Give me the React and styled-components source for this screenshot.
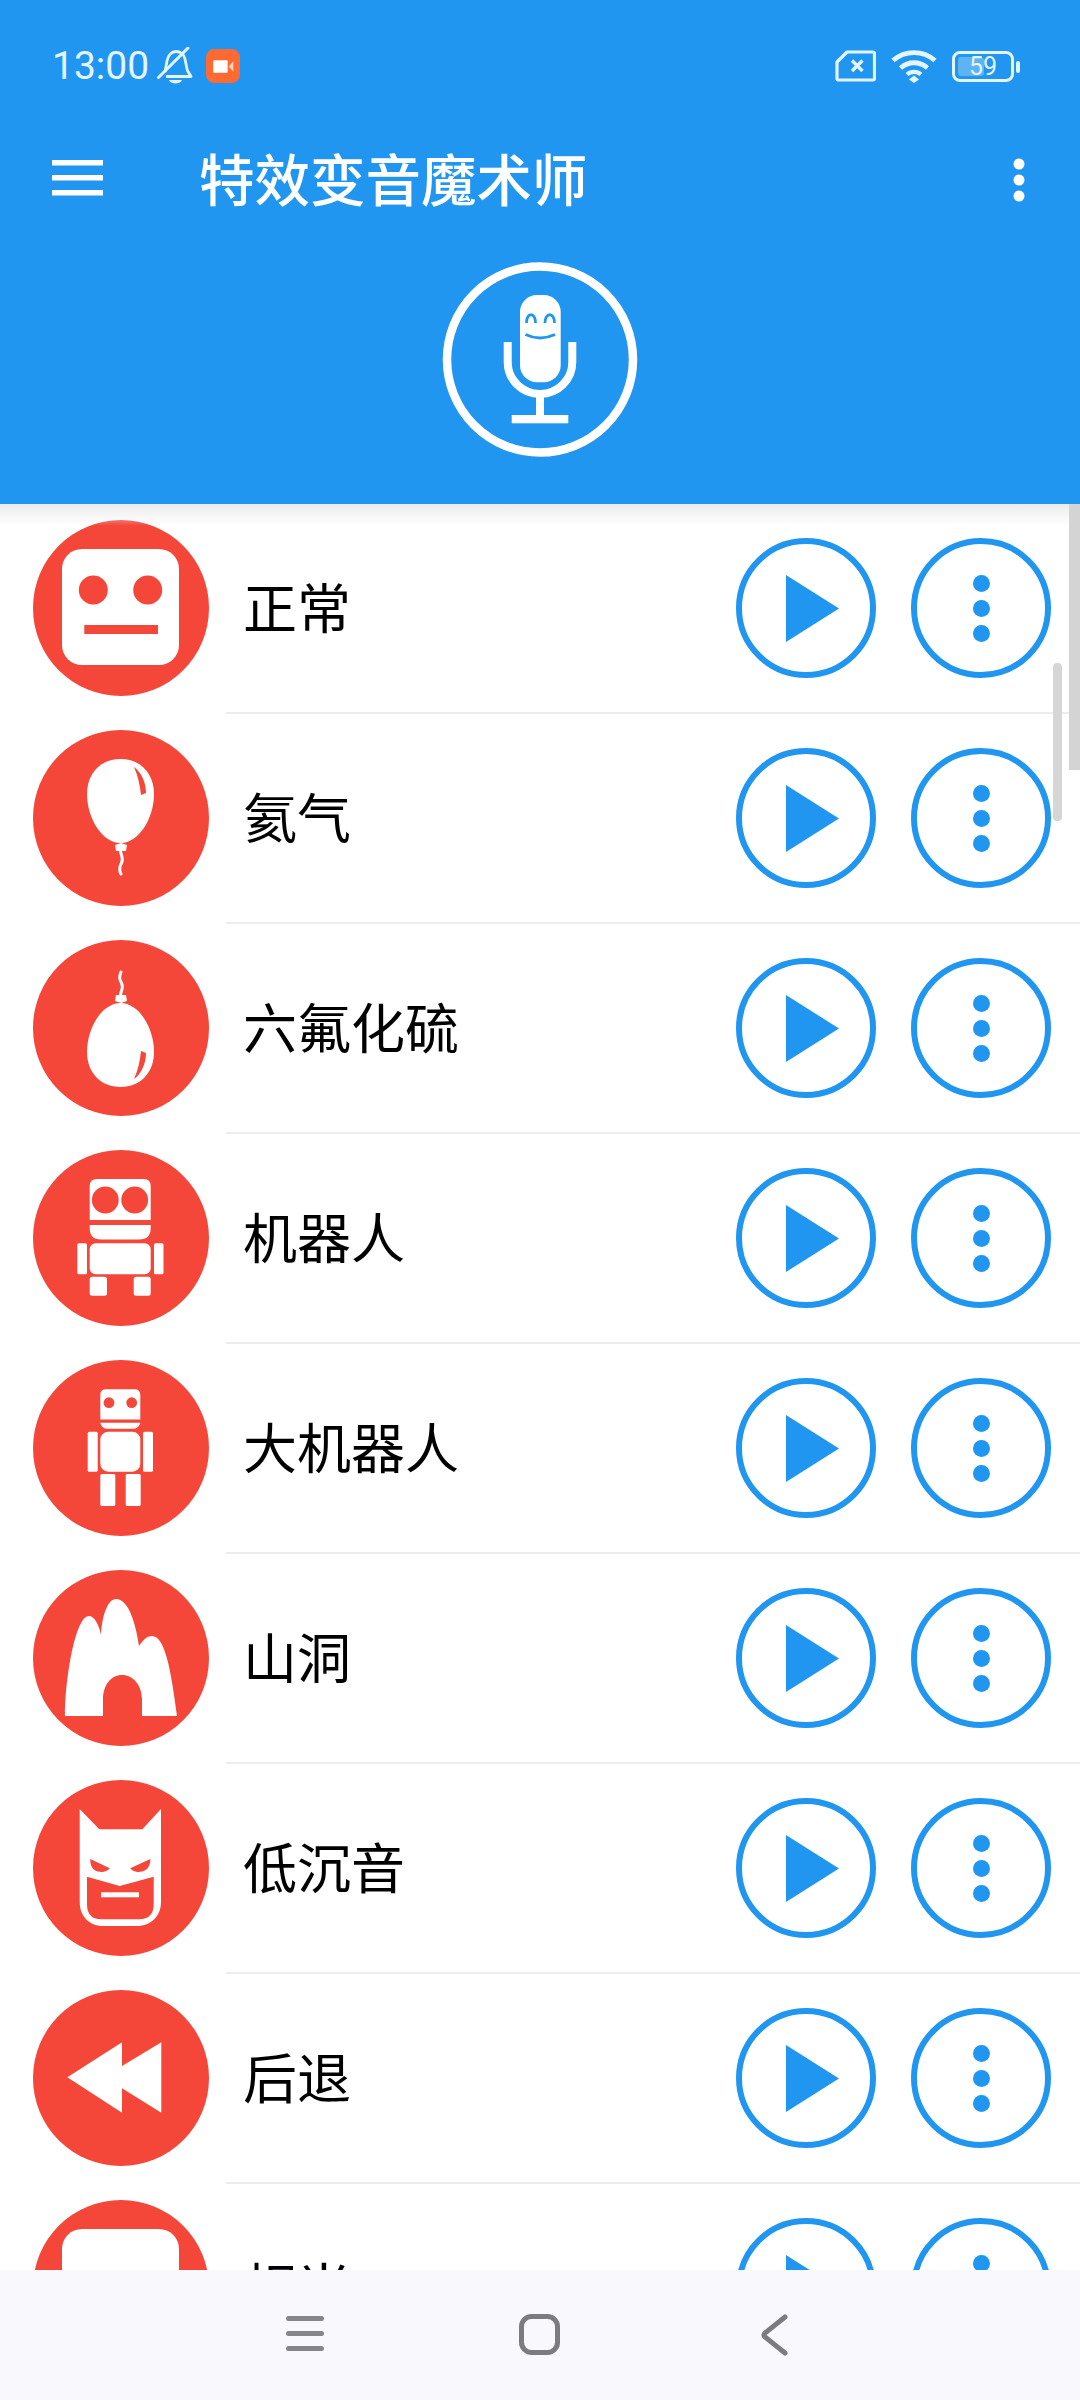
import React from 'react';
import styled, { createGlobalStyle } from 'styled-components';

const Global = createGlobalStyle`
  html, body { margin: 0; padding: 0; background: #fff; }
  * { box-sizing: border-box; }
`;
const BLUE = '#2196f0';
const RED = '#f44639';
const CJK = '"Noto Sans CJK SC", "Noto Sans", sans-serif';

const Page = styled.div`
  width: 1080px; height: 2400px; display: flex; flex-direction: column; overflow: hidden; background: #fff;
`;
const Header = styled.header`
  background: ${BLUE}; height: 504px; flex: none; display: flex; flex-direction: column;
`;
const StatusBar = styled.div`
  height: 132px; display: flex; align-items: center; justify-content: space-between; padding: 0 62px 0 52px;
`;
const StatusGroup = styled.div`
  display: flex; align-items: center; gap: ${p => p.$gap}px;
`;
const Clock = styled.span`
  font: 400 39px/1 Roboto, sans-serif; color: #e3f5ff;
`;
const Toolbar = styled.div`
  height: 96px; display: flex; align-items: center; padding: 0 55px 4px 52px;
`;
const Title = styled.h1`
  flex: 1; margin: 0 0 0 96px; font: 500 55.500px/1 ${CJK}; color: #fff;
`;
const LogoWrap = styled.div`
  display: flex; justify-content: center; margin-top: 33px;
`;
const List = styled.main`
  flex: 1; min-height: 0; overflow: hidden; position: relative;
`;
const TopShadow = styled.div`
  position: absolute; top: 0; left: 0; right: 0; height: 22px;
  background: linear-gradient(#ececee, rgba(255,255,255,0));
`;
const Track = styled.div`
  position: absolute; top: 0; right: 0; width: 11px; height: 266px; background: #d4d4d4;
`;
const Thumb = styled.div`
  position: absolute; top: 159px; right: 18px; width: 9px; height: 158px; border-radius: 4px; background: #d6d6d6;
`;
const Row = styled.div`
  height: 210px; display: flex; align-items: flex-start;
`;
const Avatar = styled.svg`
  width: 176px; height: 176px; flex: none; margin: 16px 17px 0 33px; display: block;
`;
const RowBody = styled.div`
  flex: 1; height: 210px; display: flex; align-items: center; padding: 0 29px 0 17px; gap: 35px;
  border-bottom: 2px solid #ececec;
`;
const Label = styled.span`
  flex: 1; font: 400 54px/1 ${CJK}; color: #000; padding-bottom: 4px;
`;
const RoundButton = styled.button`
  width: 140px; height: 140px; flex: none; border: 6.500px solid ${BLUE}; border-radius: 50%; background: #fff;
  padding: 0; display: flex; align-items: center; justify-content: center;
`;
const PlayGlyph = styled.svg`
  width: 53px; height: 67px; margin-left: 12px; display: block;
`;
const Dots = styled.span`
  display: flex; flex-direction: column; gap: 8px;
`;
const Dot = styled.i`
  width: 17px; height: 17px; border-radius: 50%; background: ${BLUE}; display: block;
`;
const NavBar = styled.nav`
  height: 130px; flex: none; background: #f9f8fd; position: relative; z-index: 1;
  display: flex; align-items: flex-start;
`;
const NavSlot = styled.div`
  position: absolute; top: 44px; left: ${p => p.$left}px; display: flex;
`;
const RecGlyph = styled.svg`
  width: 34px; height: 34px; margin-left: 5px; display: block;
`;
const MoreGlyph = styled.svg`
  width: 12px; height: 44px; margin-top: 3px; display: block;
`;

const Face = () => (
  <>
    <rect x="29" y="29" width="117" height="116" rx="20" fill="#fff" />
    <circle cx="60.3" cy="70" r="14.5" fill={RED} />
    <circle cx="114.7" cy="70" r="14.5" fill={RED} />
    <rect x="51.3" y="105" width="73.7" height="9" fill={RED} />
  </>
);
const Screen = () => (
  <rect x="29" y="29" width="117" height="116" rx="20" fill="#fff" />
);
const Balloon = () => (
  <>
    <path d="M87.5 29C108 29 121 44 121 64C121 88 106 113 87.5 113C69 113 54 88 54 64C54 44 67 29 87.500 29Z" fill="#fff" />
    <path d="M101 37C108 42 113 52 113 63L108 65C107 55 105 46 101 37Z" fill={RED} />
    <path d="M82 115L88 113L94 115L93 121H83Z" fill="#fff" />
    <path d="M87.5 121C88 126 91 128 88.5 133C86 137 86 140 88 144" fill="none" stroke="#fff" strokeWidth="3" strokeLinecap="round" />
  </>
);
const Robot = () => (
  <g fill="#fff">
    <path d="M64 29H110.7Q117.7 29 117.7 36V70H56.7V36Q56.7 29 64 29Z" />
    <circle cx="72.3" cy="50" r="13.4" fill={RED} />
    <circle cx="101.7" cy="50" r="13.4" fill={RED} />
    <path d="M56.7 75H117.7V78Q117.7 89.5 106 89.5H68Q56.7 89.5 56.7 78Z" />
    <rect x="56.7" y="93.3" width="61" height="31" rx="6" />
    <rect x="44.3" y="93.3" width="9.7" height="31" rx="1.5" />
    <rect x="121" y="93.3" width="9.5" height="31" rx="1.5" />
    <rect x="56.7" y="126.7" width="17.3" height="19" rx="2.5" />
    <rect x="100.7" y="126.7" width="17" height="19" rx="2.5" />
  </g>
);
const BigRobot = () => (
  <g fill="#fff">
    <path d="M73 29.3H101.5Q107.3 29.3 107.3 35V59.5H67.3V35Q67.3 29.3 73 29.3Z" />
    <circle cx="76" cy="42.7" r="5.4" fill={RED} />
    <circle cx="98.7" cy="42.7" r="5.4" fill={RED} />
    <path d="M67.3 62.7H107.3V63Q105.5 68.8 100 68.8H74Q69 68.8 67.3 63Z" />
    <rect x="67.3" y="71.7" width="40" height="40" rx="8" />
    <rect x="54.7" y="71.7" width="10" height="40" rx="1.5" />
    <rect x="110" y="71.7" width="10" height="40" rx="1.5" />
    <rect x="67.3" y="114" width="15" height="32" rx="1.5" />
    <rect x="92.7" y="114" width="15" height="32" rx="1.5" />
  </g>
);
const Cave = () => (
  <path fill="#fff" d="M32 146C32 110 42 46 56 46C61 46 66 54 68 65C69 45 75 29 83 29C96 29 103 55 106 76C110 70 114 66 119 66C132 66 138 100 144 146H109V130C109 115 100 105 89 105C78 105 70 115 70 130V146Z" />
);
const Bat = () => (
  <>
    <path fill="#fff" d="M46.7 29L66.3 49.3H109.3L128 29V122C128 136 118 146 104 146H70C56 146 46.7 136 46.7 122Z" />
    <path fill={RED} d="M57.3 79L76.7 88.3C74 92 69 92.5 65 91.5C60 90.5 57 86 57.3 79Z" />
    <path fill={RED} d="M117.3 79L97.3 88.3C100 92 105 92.5 109 91.5C114 90.5 117.5 86 117.3 79Z" />
    <path fill={RED} d="M54 96.7L86.7 106L120.7 96.7V124Q120.7 139.3 106 139.3H68Q54 139.3 54 124Z" />
    <rect x="68" y="112.3" width="38" height="5" fill="#fff" />
  </>
);
const Rewind = () => (
  <path fill="#fff" d="M34.3 87.3L89 52.3V76L128.3 52.3V122.7L89 98.3V122.7Z" />
);

const rows = [
  ['正常', <Face />],
  ['氦气', <Balloon />],
  ['六氟化硫', <g transform="translate(0 176) scale(1 -1)"><Balloon /></g>],
  ['机器人', <Robot />],
  ['大机器人', <BigRobot />],
  ['山洞', <Cave />],
  ['低沉音', <Bat />],
  ['后退', <Rewind />],
  ['相当', <Screen />],
];

const PlayIcon = () => (
  <PlayGlyph viewBox="0 0 53 67"><path d="M0 0L53 33.500L0 67Z" fill={BLUE} /></PlayGlyph>
);

const Logo = () => (
  <svg width="196" height="197" viewBox="-1 -1 196 197">
    <circle cx="97" cy="97.5" r="93" fill="none" stroke="#fff" strokeWidth="8.500" />
    <rect x="77" y="33" width="40.7" height="87.3" rx="17" fill="#fff" />
    <path d="M83.5 61C83.5 50 92.5 50 92.5 61M102 61C102 50 111.5 50 111.5 61" fill="none" stroke={BLUE} strokeWidth="2.800" />
    <path d="M82.5 72.5Q97 79.5 112 72.5" fill="none" stroke={BLUE} strokeWidth="3" />
    <path d="M64.7 80V100A32.3 32 0 0 0 129.3 100V80" fill="none" stroke="#fff" strokeWidth="8" />
    <rect x="93" y="132" width="8" height="22" fill="#fff" />
    <rect x="68.7" y="153" width="56.6" height="8.3" fill="#fff" />
  </svg>
);

const C = '#e3f5ff';
const BellOff = () => (
  <svg width="36" height="38" viewBox="0 0 36 38">
    <path d="M8 25L10 14C11 8 15 4.5 19 4.5C23 4.5 27 7 28 12L30 22C30.5 25 33 27 34 29.5H9" fill="none" stroke={C} strokeWidth="2.800" strokeLinejoin="round" />
    <path d="M1.500 30.500L31 1" stroke={C} strokeWidth="3" strokeLinecap="round" />
    <path d="M12 33H25C24 37.500 13 37.500 12 33Z" fill={C} />
  </svg>
);
const RecIcon = () => (
  <RecGlyph viewBox="0 0 33 33">
    <rect width="33" height="33" rx="8" fill="#ff6a33" />
    <rect x="7" y="11" width="14" height="12" rx="1" fill="#fff" />
    <path d="M22 17L26.500 12V22Z" fill="#ffd2bd" />
  </RecGlyph>
);
const Sim = () => (
  <svg width="41" height="32" viewBox="0 0 41 32">
    <path d="M12 2H38A1.500 1.500 0 0 1 39.500 3.500V28.500A1.500 1.500 0 0 1 38 30H3.500A1.500 1.500 0 0 1 2 28.500V12Z" fill="none" stroke={C} strokeWidth="3.200" strokeLinejoin="round" />
    <path d="M17 10.500L27.500 21M27.500 10.500L17 21" stroke={C} strokeWidth="3.400" />
  </svg>
);
const Wifi = () => (
  <svg width="46" height="34" viewBox="0 0 46 34">
    <path d="M2 11.500C14 1 32 1 44 11.500" fill="none" stroke={C} strokeWidth="4.800" />
    <path d="M9.500 19C17.500 12 28.500 12 36.500 19" fill="none" stroke={C} strokeWidth="4.800" />
    <path d="M16 25.500C20 22 26 22 30 25.500" fill="none" stroke={C} strokeWidth="4.200" />
    <path d="M23 26.500L28 30.500L23 34L18 30.500Z" fill={C} />
  </svg>
);
const Battery = styled.div`
  width: 62px; height: 31px; border: 3px solid ${C}; border-radius: 8px; position: relative;
  display: flex; align-items: center; justify-content: center;
  font: 400 25px/1 Roboto, sans-serif; color: ${C}; margin-right: 4px;
`;
const BatteryFill = styled.i`
  position: absolute; left: 3px; top: 3px; bottom: 3px; width: 26px; border-radius: 3px; background: rgba(255,255,255,.28);
`;
const BatteryNub = styled.i`
  position: absolute; right: -9px; top: 7px; width: 4px; height: 12px; border-radius: 2px; background: ${C};
`;
const BatteryText = styled.span`
  position: relative;
`;

const Menu = () => (
  <svg width="51" height="36" viewBox="0 0 51 36">
    <rect y="0" width="51" height="5.500" fill="#fff" />
    <rect y="15" width="51" height="5.500" fill="#fff" />
    <rect y="30" width="51" height="5.500" fill="#fff" />
  </svg>
);
const More = () => (
  <MoreGlyph viewBox="0 0 12 44">
    <circle cx="6" cy="6" r="5.500" fill="#fff" />
    <circle cx="6" cy="22" r="5.500" fill="#fff" />
    <circle cx="6" cy="38" r="5.500" fill="#fff" />
  </MoreGlyph>
);

export default function App() {
  return (
    <Page>
      <Global />
      <Header>
        <StatusBar>
          <StatusGroup $gap={8}>
            <Clock>13:00</Clock>
            <BellOff />
            <RecIcon />
          </StatusGroup>
          <StatusGroup $gap={15}>
            <Sim />
            <Wifi />
            <Battery>
              <BatteryFill />
              <BatteryText>59</BatteryText>
              <BatteryNub />
            </Battery>
          </StatusGroup>
        </StatusBar>
        <Toolbar>
          <Menu />
          <Title>特效变音魔术师</Title>
          <More />
        </Toolbar>
        <LogoWrap><Logo /></LogoWrap>
      </Header>
      <List>
        {rows.map(([name, icon]) => (
          <Row key={name}>
            <Avatar viewBox="0 0 176 176">
              <circle cx="88" cy="88" r="88" fill={RED} />
              {icon}
            </Avatar>
            <RowBody>
              <Label>{name}</Label>
              <RoundButton><PlayIcon /></RoundButton>
              <RoundButton>
                <Dots><Dot /><Dot /><Dot /></Dots>
              </RoundButton>
            </RowBody>
          </Row>
        ))}
        <TopShadow />
        <Track />
        <Thumb />
      </List>
      <NavBar>
        <NavSlot $left={286}>
          <svg width="38" height="40" viewBox="0 0 38 40" fill="#85858a">
            <rect y="2" width="38" height="5" rx="2.500" />
            <rect y="17" width="38" height="5" rx="2.500" />
            <rect y="32" width="38" height="5" rx="2.500" />
          </svg>
        </NavSlot>
        <NavSlot $left={519}>
          <svg width="41" height="41" viewBox="0 0 41 41">
            <rect x="2.500" y="2.500" width="36" height="36" rx="10" fill="none" stroke="#7c7c80" strokeWidth="5" />
          </svg>
        </NavSlot>
        <NavSlot $left={760}>
          <svg width="28" height="42" viewBox="0 0 28 42">
            <path d="M25 3L5 19Q3 21 5 23L25 39" fill="none" stroke="#7c7c80" strokeWidth="5" strokeLinecap="round" />
          </svg>
        </NavSlot>
      </NavBar>
    </Page>
  );
}
